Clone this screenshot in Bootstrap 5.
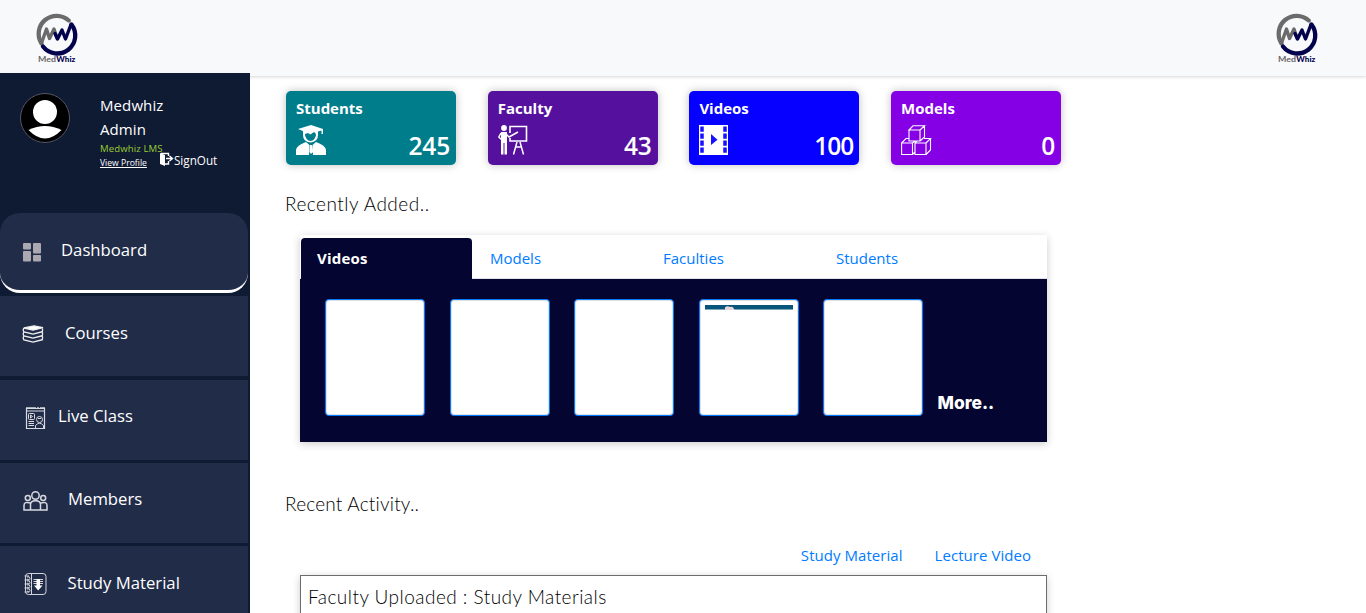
<!DOCTYPE html>
<html lang="en">
<head>
<meta charset="utf-8">
<meta name="viewport" content="width=device-width, initial-scale=1">
<title>MedWhiz</title>
<link href="https://cdn.jsdelivr.net/npm/bootstrap@5.3.0/dist/css/bootstrap.min.css" rel="stylesheet">
<style>
body{font-family:"Open Sans","Noto Sans",sans-serif;font-size:15px;overflow:hidden;height:613px;background:#fff}
a{text-decoration:none;color:#007bff}
svg{display:block;flex:none}
.topbar{height:76px;background:#f8f9fb;box-shadow:0 1px 3px rgba(0,0,0,.16);padding:0 45px 0 31px}
.brand-logo{width:50px;height:56px;margin-top:-1px;overflow:visible}
.sidebar{width:250px;height:540px;margin-top:-3px;background:#0f1a33;z-index:2;overflow:hidden;color:#fff}
.profile{height:140px;padding:20px 0 0 20px}
.who{margin-left:30px;width:140px;line-height:24px;letter-spacing:.1px}
.lms{font-size:9.6px;line-height:16px;color:#9acd32}
.profile-link{font-size:8.6px;letter-spacing:0;color:#fff;text-decoration:underline;line-height:12px}
.signout{font-size:11.7px;letter-spacing:0;color:#fff;line-height:16px;margin:-5px 0 0 13px}
.menu-item{width:248px;height:80px;margin-bottom:3.33px;background:#212c49;color:#fff;font-size:16.7px;padding-left:22px;flex:none}
.menu-item:not(.current){padding-bottom:4px}
.menu-item.current{border-bottom:3px solid #fff;border-radius:20px;padding-top:1px}
.menu-item span{margin-top:-4px;white-space:nowrap}
.content{padding:15px 0 0 35px;width:812px}
.stats{gap:31.7px;padding-left:1px}
.stat{width:170px;height:74px;border-radius:5px;box-shadow:0 0 9px rgba(0,0,0,.25);color:#fff;padding:7px 6px 0 10px;flex:none}
.stat b{font-size:15px;line-height:21px;display:block}
.stat svg{margin-top:6px}
.stat .num{font-size:24.5px;font-weight:600;line-height:28px;margin-top:13px;letter-spacing:-.2px}
.geo{font-family:Lato,"Open Sans",sans-serif;font-weight:300;color:#000}
.sect{font-size:19px;line-height:24px;letter-spacing:.5px}
.panel{width:747px;margin-left:15px;box-shadow:0 2px 8px rgba(0,0,0,.2)}
.tabs{height:44px;border-bottom:1px solid #dee2e6;padding:3px 0 0 1px;background:#fff}
.tab-link{width:173px;padding:9px 16px 0;line-height:22px;flex:none}
.tab-link.active{width:171px;height:41px;background:#050532;color:#fff;font-weight:700;border-radius:4px 4px 0 0;margin-right:2px;letter-spacing:.2px}
.pane{height:163px;background:#050532;padding:20px 0 0 25px}
.thumb{width:100px;height:117px;border:1px solid #007bff;border-radius:4px;background:#fff;box-shadow:inset 0 0 0 1px #dee2e6;margin-right:24.5px;flex:none;padding:5px}
.more{font-family:Inter,sans-serif;font-weight:800;font-size:17.4px;color:#fff;margin:92px 0 0 -10px;line-height:24px}
.activity{width:747px;height:60px;margin-left:15px;border:1px solid #6c6c70;box-shadow:0 2px 8px rgba(0,0,0,.2);padding:9px 7px;font-size:19px;line-height:24px;letter-spacing:.47px}
</style>
</head>
<body>
<nav class="topbar d-flex justify-content-between align-items-center">
<svg class="brand-logo" viewBox="0 0 50 56">
<g fill="none" stroke-width="4.300" stroke-linecap="round" stroke-linejoin="round">
<path stroke="#6b6b6b" d="M10.500 33.500A18 18 0 0 1 37.800 10.500"/>
<path stroke="#6b6b6b" stroke-width="3.400" d="M10.500 33L15.500 19L18.500 28.500L23 19L26 28"/>
<path stroke="#03034d" stroke-width="3.400" d="M24 23.500L26.500 29L31 20L34.500 29L40 14.500"/>
<path stroke="#03034d" d="M40.500 14.500A18 18 0 0 1 12 36.500"/>
</g>
<text x="7" y="52" font-family="Lato,sans-serif" font-size="8.300" font-weight="700" fill="#666" textLength="18" lengthAdjust="spacingAndGlyphs">Med</text>
<text x="25.300" y="52" font-family="Lato,sans-serif" font-size="8.300" font-weight="900" fill="#03034d" textLength="19" lengthAdjust="spacingAndGlyphs">Whiz</text>
</svg>
<svg class="brand-logo" viewBox="0 0 50 56">
<g fill="none" stroke-width="4.300" stroke-linecap="round" stroke-linejoin="round">
<path stroke="#6b6b6b" d="M10.500 33.500A18 18 0 0 1 37.800 10.500"/>
<path stroke="#6b6b6b" stroke-width="3.400" d="M10.500 33L15.500 19L18.500 28.500L23 19L26 28"/>
<path stroke="#03034d" stroke-width="3.400" d="M24 23.500L26.500 29L31 20L34.500 29L40 14.500"/>
<path stroke="#03034d" d="M40.500 14.500A18 18 0 0 1 12 36.500"/>
</g>
<text x="7" y="52" font-family="Lato,sans-serif" font-size="8.300" font-weight="700" fill="#666" textLength="18" lengthAdjust="spacingAndGlyphs">Med</text>
<text x="25.300" y="52" font-family="Lato,sans-serif" font-size="8.300" font-weight="900" fill="#03034d" textLength="19" lengthAdjust="spacingAndGlyphs">Whiz</text>
</svg>
</nav>

<div class="d-flex">
<aside class="sidebar position-relative flex-shrink-0">
<div class="profile d-flex">
<svg width="50" height="50" viewBox="0 0 50 50"><circle cx="25" cy="25" r="24.500" fill="#000" stroke="#556"/><ellipse cx="25" cy="19" rx="12" ry="12" fill="#fff"/><path d="M8.500 37Q25 29 41.500 37Q25 54 8.500 37Z" fill="#fff"/></svg>
<div class="who">
<div>Medwhiz<br>Admin</div>
<div class="lms">Medwhiz LMS</div>
<div class="d-flex align-items-start">
<a href="#" class="profile-link">View Profile</a>
<a href="#" class="signout d-flex">
<svg width="14" height="15" viewBox="0 0 14 15"><path d="M0 1L5 3V14L0 12Z" fill="#fff"/><path d="M1 1.500H8.500V4M8.500 9V12H5M6 6.500H12M9.500 4L12.500 6.500L9.500 9" fill="none" stroke="#fff" stroke-width="1.400"/></svg><span>SignOut</span></a>
</div>
</div>
</div>

<a href="#" class="menu-item current d-flex align-items-center">
<svg width="19" height="19" viewBox="0 0 19 19" fill="#aaa9b1"><rect x="1" y="0" width="8" height="6.500" rx="1"/><rect x="1" y="8" width="8" height="10.500" rx="1"/><rect x="11" y="0" width="8" height="10.500" rx="1"/><rect x="11" y="12" width="8" height="6.500" rx="1"/></svg>
<span style="margin-left:20px">Dashboard</span></a>
<a href="#" class="menu-item d-flex align-items-center">
<svg width="22" height="18" viewBox="0 0 22 18" fill="none" stroke="#eee" stroke-width="1.300"><path d="M2 3L12 .8L21 2.700L11 5.200Z" fill="#fff"/><path d="M2 3Q.5 5 2 7L11 9.200L21 6.500M2 7Q.5 9 2 11L11 13.200L21 10.500M2 11Q.5 13 2 15L11 17.200L21 14.500M20.500 3.500V6M20.500 7.500V10M20.500 11.500V14"/></svg>
<span style="margin-left:21px">Courses</span></a>
<a href="#" class="menu-item d-flex align-items-center">
<svg width="25" height="22" viewBox="0 0 25 22" fill="none" stroke="#d9dae0"><path d="M4.500 1.500H22.500V21.500H4.500ZM4.500 4H22.500" stroke-width="1.200"/><path d="M4 1H23" stroke-width="1.600" stroke-dasharray="10 1 2 1"/><rect x="6.500" y="6.500" width="6" height="6" rx="1"/><path d="M8.500 8V11L10.500 9.500ZM6.500 14.500H12M6.500 16.500H12M6.500 18.500H12"/><circle cx="17.500" cy="12.500" r="3"/><path d="M13.500 21V18.500Q17.500 14 21.500 18.500V21M16 11.500H19"/></svg>
<span style="margin-left:11px">Live Class</span></a>
<a href="#" class="menu-item d-flex align-items-center">
<svg width="26" height="20" viewBox="0 0 26 20" fill="none" stroke="#d7d8df" stroke-width="1.500"><circle cx="13.500" cy="4.500" r="3.700"/><circle cx="5.800" cy="7" r="2.500"/><circle cx="21.200" cy="7" r="2.500"/><path d="M8.500 19V13.500Q8.500 9.700 13.500 9.700T18.500 13.500V19M8.500 12Q2 10 2 14.500V19H25V14.500Q25 10 18.500 12"/></svg>
<span style="margin-left:20px">Members</span></a>
<a href="#" class="menu-item d-flex align-items-center">
<svg width="25" height="24" viewBox="0 0 25 24" fill="none" stroke="#d5d6dd"><rect x="3.500" y="1.500" width="20.500" height="21" rx="3"/><path d="M9.500 1.500V22.500"/><path d="M2.500 4H7M2.500 8H7M2.500 12H7M2.500 16H7M2.500 20H7"/><path d="M5 5Q8 4 8 6.500T5 7M5 9Q8 8 8 10.500T5 11M5 13Q8 12 8 14.500T5 15M5 17Q8 16 8 18.500T5 19"/><path d="M11.500 7.500H21M11.500 9.500H21M11.500 11.500H21"/><path d="M14.500 7H18V13.500H20.500L16.200 18.500L12 13.500H14.500Z" fill="#fff" stroke="none"/></svg>
<span style="margin-left:20.5px">Study Material</span></a>
</aside>

<main class="content">
<div class="stats d-flex">
<div class="stat" style="background:#007d8b"><b>Students</b><div class="d-flex justify-content-between">
<svg width="30" height="30" viewBox="0 0 30 30" fill="#fff"><path d="M2 4L15 0L27 4V9H25.500V5.500L22 6.500L15 5L8 6.500Z"/><path d="M7 5Q15 2 22 5V10Q22 17 14.500 17.500Q7 17 7 10ZM9 10Q10 15.500 14.500 16Q19 15.500 20 10Q20 8 18 7Q16 8 14.500 9.500Q12 7.500 9 9Z" fill-rule="evenodd"/><path d="M0 30V25Q1 20 10 17L13.500 20L13 30ZM17 30L16.500 20L20 17Q29 20 30 25V30ZM14 20H16L17 27L15 29L13.500 27Z"/></svg>
<div class="num">245</div></div></div>
<div class="stat" style="background:#55119e"><b>Faculty</b><div class="d-flex justify-content-between">
<svg width="30" height="30" viewBox="0 0 30 30" fill="none" stroke="#fff"><circle cx="6" cy="3" r="2.900" fill="#fff" stroke="none"/><path d="M3 7H9V29.500H6.500V18H5.500V29.500H3Z" fill="#fff" stroke="none"/><path d="M3 8L.8 12L4 15M8 9L11 12L20 7M19 17L15.500 29.500M22 17L25.500 29.500M17.500 22H23.500" stroke-width="1.500"/><path d="M12 8V1.500H28.500V16H12V13" stroke-width="1.600"/></svg>
<div class="num">43</div></div></div>
<div class="stat" style="background:#0500ff"><b>Videos</b><div class="d-flex justify-content-between">
<svg width="29" height="30" viewBox="0 0 29 30"><path fill="#fff" d="M0 0H29V30H0Z"/><path fill="#1510ff" d="M12 9L18.500 14.700L12 20Z"/><path d="M3 1.500V29M26 1.500V29" stroke="#1510ff" stroke-width="3.500" stroke-dasharray="5.300 1.700"/></svg>
<div class="num" style="letter-spacing:-1px">100</div></div></div>
<div class="stat" style="background:#8500e5"><b>Models</b><div class="d-flex justify-content-between">
<svg width="31" height="30" viewBox="0 0 31 30" fill="none" stroke="#fff" stroke-width="1.100"><path d="M8 5L12 .8H23.500L19 5ZM8 5H19V16H8ZM19 5L23.500 .8V12L19 16M.6 18L5 13.500H8M.6 18H11.500V29.500H.6ZM11.500 18L14 16M14 18H25V29.500H14ZM14 18L16 16M25 18L29.500 13.500H23M29.500 13.500V25L25 29.500M11.500 29.500L14 27"/></svg>
<div class="num">0</div></div></div>
</div>

<h2 class="geo sect mb-0" style="margin-top:27px">Recently Added..</h2>
<section class="panel" style="margin-top:19px">
<div class="tabs d-flex">
<a href="#" class="tab-link active">Videos</a><a href="#" class="tab-link">Models</a><a href="#" class="tab-link">Faculties</a><a href="#" class="tab-link">Students</a>
</div>
<div class="pane d-flex">
<div class="thumb"></div><div class="thumb"></div><div class="thumb"></div>
<div class="thumb"><svg class="w-100" height="5" viewBox="0 0 88 5" preserveAspectRatio="none"><path fill="#07557a" d="M0 0H88V4H0Z"/><path fill="#7da7b9" d="M0 4H88V5H0Z"/><path fill="#ead7da" d="M20 5V2.500Q22 .5 25 2Q28 .5 29.500 5Z"/></svg></div>
<div class="thumb"></div>
<a href="#" class="more">More..</a>
</div>
</section>

<h2 class="geo sect mb-0" style="margin-top:50px;letter-spacing:.2px">Recent Activity..</h2>
<div class="d-flex justify-content-end" style="margin-top:28px;padding-right:31px;gap:32px;line-height:22px;letter-spacing:.05px">
<a href="#">Study Material</a><a href="#">Lecture Video</a>
</div>
<div class="activity geo" style="margin-top:9px">Faculty Uploaded : Study Materials</div>
</main>
</div>
<script src="https://cdn.jsdelivr.net/npm/bootstrap@5.3.0/dist/js/bootstrap.bundle.min.js"></script>
</body>
</html>
